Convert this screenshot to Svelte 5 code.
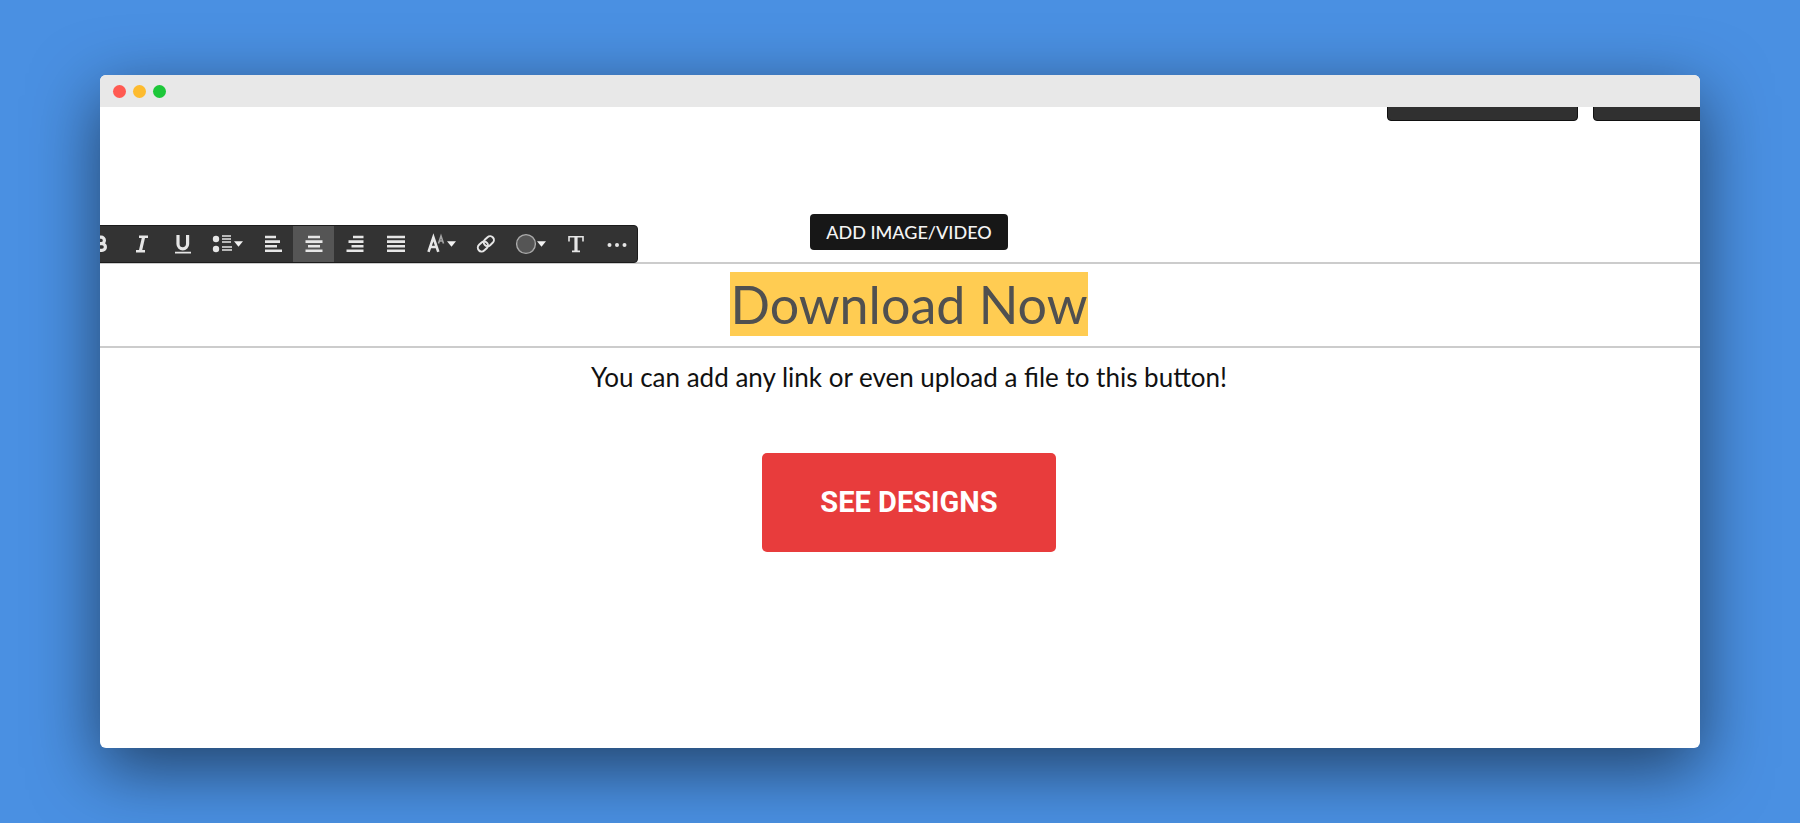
<script lang="ts">
	type IconName =
		| 'bold'
		| 'italic'
		| 'underline'
		| 'list'
		| 'left'
		| 'center'
		| 'right'
		| 'justify'
		| 'size'
		| 'link'
		| 'color'
		| 'type'
		| 'more';

	interface Tool {
		icon: IconName;
		label: string;
		menu?: boolean;
	}

	const tools: Tool[] = [
		{ icon: 'bold', label: 'Bold' },
		{ icon: 'italic', label: 'Italic' },
		{ icon: 'underline', label: 'Underline' },
		{ icon: 'list', label: 'List', menu: true },
		{ icon: 'left', label: 'Align left' },
		{ icon: 'center', label: 'Align center' },
		{ icon: 'right', label: 'Align right' },
		{ icon: 'justify', label: 'Justify' },
		{ icon: 'size', label: 'Font size', menu: true },
		{ icon: 'link', label: 'Insert link' },
		{ icon: 'color', label: 'Text color', menu: true },
		{ icon: 'type', label: 'Font' },
		{ icon: 'more', label: 'More options' }
	];

	const alignments: IconName[] = ['left', 'center', 'right', 'justify'];

	let alignment: IconName = $state('center');

	function handleTool(icon: IconName) {
		if (alignments.includes(icon)) {
			alignment = icon;
		}
	}
</script>

<main class="stage">
	<div class="window">
		<header class="titlebar">
			<span class="dot red"></span>
			<span class="dot amber"></span>
			<span class="dot green"></span>
		</header>

		<div class="viewport">
			<div class="canvas">
				<div class="page-actions">
					<button type="button" class="page-action" aria-label="Preview"></button>
					<button type="button" class="page-action" aria-label="Save"></button>
				</div>

				<div class="tools">
					<div class="toolbar" role="toolbar" aria-label="Text formatting">
						{#each tools as tool (tool.icon)}
							<button
								type="button"
								class="tool"
								class:menu={tool.menu}
								class:active={alignment === tool.icon}
								aria-label={tool.label}
								onclick={() => handleTool(tool.icon)}
							>
								<svg class="icon" viewBox="0 0 20 20" aria-hidden="true">
									{#if tool.icon === 'bold'}
										<path class="line bold" d="M5 3.2h5.2a3.2 3.2 0 0 1 0 6.4H5zM5 9.6h6a3.4 3.4 0 0 1 0 6.8H5z" />
									{:else if tool.icon === 'italic'}
										<path class="line bold" d="M11.6 3 8.4 17" />
										<path class="line heavy" d="M7 2.8h9M4 17.2h9" />
									{:else if tool.icon === 'underline'}
										<path class="line bold" d="M5 1v9a4.8 4.8 0 0 0 9.6 0V1" />
										<path class="line" d="M2 18.6h16" />
									{:else if tool.icon === 'list'}
										<circle cx="3" cy="5" r="3.2" />
										<circle cx="3" cy="15" r="3.2" />
										<path class="line" d="M9 2h9M9 5h9M9 8h9M9 13h10M9 16h10" />
									{:else if tool.icon === 'left'}
										<path class="line heavy" d="M2 3h11M2 7.6h15M2 12.2h12M2 16.8h17" />
									{:else if tool.icon === 'center'}
										<path class="line heavy" d="M4 3h12M1.5 7.6h17M4 12.2h12M1.5 16.8h17" />
									{:else if tool.icon === 'right'}
										<path class="line heavy" d="M8 3h10.5M3.5 7.6h15M6.5 12.2h12M1.5 16.8h17" />
									{:else if tool.icon === 'justify'}
										<path class="line heavy" d="M1 3h18M1 7.6h18M1 12.2h18M1 16.8h18" />
									{:else if tool.icon === 'size'}
										<path class="line heavy" d="M2.5 17.8 7.4 3.4l4.9 14.4M4.2 13h6.4" />
										<path class="line faint" d="m12.5 9.5 2.5-7.5 2.5 7.5M13.4 7h3.2" />
									{:else if tool.icon === 'link'}
										<g transform="rotate(-42 10 10)">
											<rect class="line link" x="0.5" y="6" width="11" height="7.6" rx="3.8" />
											<rect class="line link" x="8.5" y="6" width="11" height="7.6" rx="3.8" />
										</g>
									{:else if tool.icon === 'color'}
										<circle class="swatch" cx="10" cy="10" r="9.4" />
									{:else if tool.icon === 'type'}
										<path class="line bold" d="M10 3v14" />
										<path class="line" d="M3 7.5V2.8h14v4.7M6 17.4h8" />
									{:else}
										<circle cx="2.5" cy="11" r="2" />
										<circle cx="10" cy="11" r="2" />
										<circle cx="17.5" cy="11" r="2" />
									{/if}
								</svg>
								{#if tool.menu}
									<svg class="caret" viewBox="0 0 8 5" aria-hidden="true">
										<path d="M0 0h8L4 5z" />
									</svg>
								{/if}
							</button>
						{/each}
					</div>

					<button type="button" class="add-media">ADD IMAGE/VIDEO</button>
				</div>

				<section class="title-row">
					<h1><mark>Download Now</mark></h1>
				</section>

				<section class="body-row">
					<p>You can add any link or even upload a file to this button!</p>
					<a class="cta" href="#designs">SEE DESIGNS</a>
				</section>
			</div>
		</div>
	</div>
</main>

<style>
	:global(body) {
		margin: 0;
	}

	.stage {
		display: flex;
		box-sizing: border-box;
		min-height: 100vh;
		padding: 75px 100px;
		overflow: hidden;
		background: #4a90e2;
		font-family: Lato, 'Liberation Sans', sans-serif;
	}

	.window {
		display: flex;
		flex: 1;
		flex-direction: column;
		min-width: 0;
		overflow: hidden;
		border-radius: 6px;
		background: #fff;
		box-shadow: 0 20px 68px rgba(0, 0, 0, 0.55);
	}

	.titlebar {
		display: flex;
		align-items: center;
		gap: 7px;
		height: 32px;
		padding: 1px 13px 0;
		box-sizing: border-box;
		background: #e8e8e8;
	}

	.dot {
		width: 13px;
		height: 13px;
		border-radius: 50%;
	}

	.red {
		background: #ff5a52;
	}

	.amber {
		background: #fdbb2f;
	}

	.green {
		background: #1dc739;
	}

	.viewport {
		flex: 1;
		overflow: hidden;
	}

	/* The page is wider than the window and bleeds off its right edge. */
	.canvas {
		width: calc(100% + 18px);
	}

	button {
		border: 0;
		font-family: inherit;
		cursor: pointer;
	}

	.page-actions {
		display: flex;
		justify-content: flex-end;
		gap: 15px;
		margin: -30px -66px 0 0;
	}

	.page-action {
		width: 191px;
		height: 44px;
		box-sizing: border-box;
		border: 1px solid #111;
		border-radius: 4px;
		background: #303030;
	}

	.tools {
		display: grid;
		height: 141px;
	}

	.toolbar {
		display: flex;
		grid-area: 1 / 1;
		align-self: end;
		justify-self: start;
		z-index: 1;
		margin: 0 0 -1px -21px;
		overflow: hidden;
		box-sizing: border-box;
		height: 38px;
		border: 1px solid #1c1c1c;
		border-radius: 4px;
		background: #333;
	}

	.tool {
		display: flex;
		align-items: center;
		justify-content: center;
		width: 41px;
		padding: 0;
		background: transparent;
	}

	.tool.menu {
		width: 49px;
	}

	.tool.active {
		background: #555;
	}

	.icon {
		width: 20px;
		height: 20px;
		fill: #e6e6e6;
		overflow: visible;
	}

	.caret {
		width: 9px;
		height: 6px;
		margin-left: 1px;
		fill: #f2f2f2;
	}

	.line {
		fill: none;
		stroke: #e6e6e6;
		stroke-width: 1.6;
	}

	.link {
		stroke-width: 2;
	}

	.heavy {
		stroke-width: 2.6;
	}

	.bold {
		stroke-width: 3.2;
	}

	.faint {
		stroke: #a5a5a5;
	}

	.swatch {
		fill: #555;
		stroke: #aaa;
		stroke-width: 1.4;
	}

	.add-media {
		grid-area: 1 / 1;
		align-self: end;
		justify-self: center;
		margin-bottom: 12px;
		height: 36px;
		padding: 0 16px;
		border-radius: 4px;
		background: #171717;
		color: #f4f4f4;
		font-size: 18px;
		font-weight: 500;
		line-height: 36px;
	}

	.title-row {
		padding: 8px 0 10px;
		border-top: 2px solid #ccc;
		border-bottom: 2px solid #ccc;
		text-align: center;
	}

	h1 {
		margin: 0;
		color: #505050;
		font-size: 52px;
		font-weight: 400;
		line-height: 64px;
	}

	mark {
		display: inline-block;
		background: #ffcc52;
		color: inherit;
	}

	.body-row {
		display: flex;
		flex-direction: column;
		align-items: center;
	}

	p {
		margin: 13px 0 60px;
		color: #111;
		font-size: 26px;
		line-height: 32px;
	}

	.cta {
		padding: 33px 58px;
		border-radius: 5px;
		background: #e83c3c;
		color: #fff;
		font-family: Roboto, 'Liberation Sans', sans-serif;
		font-size: 29px;
		font-weight: 700;
		line-height: 33px;
		text-decoration: none;
	}
</style>
